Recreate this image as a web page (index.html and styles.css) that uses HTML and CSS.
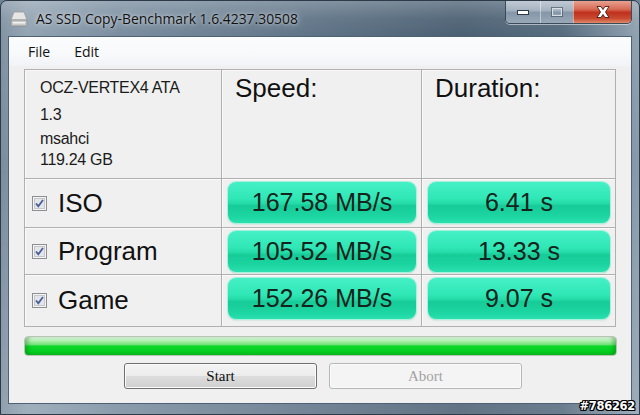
FILE: index.html
```html
<!DOCTYPE html>
<html>
<head>
<meta charset="utf-8">
<link rel="stylesheet" href="styles.css">
</head>
<body>
<div class="window">
  <div class="titlebar">
    <svg class="app-icon" width="18" height="16" viewBox="0 0 18 16">
      <path d="M4 1 L14 1 L17 9 L1 9 Z" fill="#e6e6e6" stroke="#9a9a9a" stroke-width="0.8"/>
      <rect x="1" y="9" width="16" height="6" rx="1.5" fill="#c9c9c9" stroke="#8a8a8a" stroke-width="0.8"/>
      <rect x="3" y="11" width="12" height="1.5" fill="#f2f2f2"/>
    </svg>
    <span class="title">AS SSD Copy-Benchmark 1.6.4237.30508</span>
    <div class="caption-buttons">
      <div class="cb cb-min">
        <svg width="14" height="8" viewBox="0 0 14 8"><rect x="1.5" y="2.5" width="11" height="4" fill="#fff" stroke="#2c3a48" stroke-width="1"/></svg>
      </div>
      <div class="cb cb-max">
        <svg width="14" height="12" viewBox="0 0 14 12"><rect x="1.5" y="1.5" width="11" height="9" fill="none" stroke="#2c3a48" stroke-width="1" opacity="0.6"/><rect x="2.5" y="2.5" width="9" height="7" fill="none" stroke="#d7dde3" stroke-width="1.2"/></svg>
      </div>
      <div class="cb cb-close">
        <svg width="18" height="14" viewBox="0 0 18 14"><path d="M3 1.5 H7 L9 4.5 L11 1.5 H15 L11.5 7 L15 12.5 H11 L9 9.5 L7 12.5 H3 L6.5 7 Z" fill="#fff" stroke="#4a1a12" stroke-width="0.9" stroke-linejoin="round"/></svg>
      </div>
    </div>
  </div>
  <div class="client">
    <div class="menubar">
      <span class="menu-item">File</span>
      <span class="menu-item">Edit</span>
    </div>
    <div class="content">
      <div class="grid">
        <div class="cell info">
          <div class="info-line l1">OCZ-VERTEX4 ATA</div>
          <div class="info-line l2">1.3</div>
          <div class="info-line l3">msahci</div>
          <div class="info-line l4">119.24 GB</div>
        </div>
        <div class="cell head">Speed:</div>
        <div class="cell head">Duration:</div>

        <div class="cell label">
          <svg class="check" width="15" height="15" viewBox="0 0 15 15"><rect x="0.5" y="0.5" width="14" height="14" fill="#f4f4f4" stroke="#8e8f8f"/><rect x="2.5" y="2.5" width="10" height="10" fill="#e2e6ea" stroke="#c4c8cc"/><path d="M4 7.5 L6.3 10.2 L11 4" fill="none" stroke="#4a5f97" stroke-width="1.8"/></svg>
          <span>ISO</span>
        </div>
        <div class="cell val"><div class="pill">167.58 MB/s</div></div>
        <div class="cell val"><div class="pill">6.41 s</div></div>

        <div class="cell label">
          <svg class="check" width="15" height="15" viewBox="0 0 15 15"><rect x="0.5" y="0.5" width="14" height="14" fill="#f4f4f4" stroke="#8e8f8f"/><rect x="2.5" y="2.5" width="10" height="10" fill="#e2e6ea" stroke="#c4c8cc"/><path d="M4 7.5 L6.3 10.2 L11 4" fill="none" stroke="#4a5f97" stroke-width="1.8"/></svg>
          <span>Program</span>
        </div>
        <div class="cell val"><div class="pill">105.52 MB/s</div></div>
        <div class="cell val"><div class="pill">13.33 s</div></div>

        <div class="cell label">
          <svg class="check" width="15" height="15" viewBox="0 0 15 15"><rect x="0.5" y="0.5" width="14" height="14" fill="#f4f4f4" stroke="#8e8f8f"/><rect x="2.5" y="2.5" width="10" height="10" fill="#e2e6ea" stroke="#c4c8cc"/><path d="M4 7.5 L6.3 10.2 L11 4" fill="none" stroke="#4a5f97" stroke-width="1.8"/></svg>
          <span>Game</span>
        </div>
        <div class="cell val"><div class="pill">152.26 MB/s</div></div>
        <div class="cell val"><div class="pill">9.07 s</div></div>
      </div>
      <div class="progress"></div>
      <div class="buttons">
        <div class="btn">Start</div>
        <div class="btn disabled">Abort</div>
      </div>
    </div>
  </div>
  <div class="bottom-frame"></div>
  <div class="watermark">#786262</div>
</div>
</body>
</html>
```

FILE: styles.css
```css
* { box-sizing: border-box; }
html, body { margin: 0; padding: 0; }
body { width: 640px; height: 415px; overflow: hidden; background: #6f8396; }

.window {
  position: relative;
  width: 640px;
  height: 415px;
  display: flex;
  flex-direction: column;
  border-radius: 7px 7px 0 0;
  background:
    linear-gradient(180deg, rgba(255,255,255,0.08) 0%, rgba(255,255,255,0) 40%, rgba(255,255,255,0.18) 100%),
    linear-gradient(90deg, #7a8c9d 0%, #8c9eae 4%, #72879a 18%, #586e82 45%, #40566a 72%, #4b6276 88%, #8a9cac 100%);
  border: 1px solid #2d3a47;
  overflow: hidden;
}

.titlebar {
  height: 35px;
  display: flex;
  align-items: center;
  padding: 0 7px 0 9px;
  background: linear-gradient(180deg, rgba(255,255,255,0.22) 0%, rgba(255,255,255,0.05) 50%, rgba(0,0,0,0) 100%);
}
.app-icon { flex: none; }
.title {
  margin-left: 8px;
  font-family: "Open Sans", "Noto Sans", sans-serif;
  font-size: 13.9px;
  color: #111;
  text-shadow: 0 0 7px rgba(255,255,255,0.7), 0 0 3px rgba(255,255,255,0.5);
  white-space: nowrap;
}
.caption-buttons {
  margin-left: auto;
  align-self: flex-start;
  display: flex;
  height: 24px;
  margin-top: -1px;
  border: 1px solid #3b4b5a;
  border-top: none;
  border-radius: 0 0 5px 5px;
  overflow: hidden;
  box-shadow: 0 1px 0 rgba(255,255,255,0.5);
}
.cb {
  display: flex;
  align-items: center;
  justify-content: center;
  height: 100%;
  border-left: 1px solid rgba(255,255,255,0.45);
}
.cb:first-child { border-left: none; }
.cb-min, .cb-max {
  width: 34px;
  background: linear-gradient(180deg, #c3cdd7 0%, #a6b3c0 45%, #8496a8 55%, #9aa9b8 100%);
}
.cb-max { width: 33px; }
.cb-close {
  width: 58px;
  background: linear-gradient(180deg, #e9a898 0%, #d76b55 40%, #c0301c 55%, #c84a30 80%, #e08a6a 100%);
}

.client {
  flex: 1;
  margin: 0 7px;
  background: #f0f0f0;
  border: 1px solid #4f6275;
  display: flex;
  flex-direction: column;
}
.menubar {
  height: 29px;
  display: flex;
  align-items: center;
  gap: 24px;
  padding-left: 19px;
  background: linear-gradient(180deg, #fbfcfd 0%, #f8f9fb 60%, #f1f3f6 100%);
  font-family: "Open Sans", "Noto Sans", sans-serif;
  font-size: 14px;
  color: #111;
}

.content {
  padding: 3px 0 0 15px;
  display: flex;
  flex-direction: column;
}

.grid {
  display: grid;
  grid-template-columns: 197px 200px 194px;
  grid-template-rows: 109px 49px 47px 52px;
  width: 592px;
  border-top: 1px solid #b0b0b0;
  border-left: 1px solid #b0b0b0;
  font-family: "Liberation Sans", Arial, sans-serif;
  color: #111;
}
.cell {
  border-right: 1px solid #b0b0b0;
  border-bottom: 1px solid #b0b0b0;
  box-shadow: inset 1px 1px 0 #fafafa;
}

.info { padding: 8px 0 0 15px; font-size: 16px; line-height: 20px; color: #1b1b1b; }
.info-line { letter-spacing: -0.3px; }
.l2 { margin-top: 7px; }
.l3 { margin-top: 4px; }
.l4 { margin-top: 1px; }

.head {
  padding: 3px 0 0 13px;
  font-size: 26px;
  line-height: 30px;
}

.label {
  display: flex;
  align-items: center;
  padding-left: 7px;
  font-size: 26px;
}
.label .check { margin-right: 11px; flex: none; }

.val {
  padding: 3px 5px 0 6px;
}
.pill {
  height: 41px;
  border-radius: 8px;
  display: flex;
  align-items: center;
  justify-content: center;
  font-size: 25px;
  color: #14231c;
  background: linear-gradient(180deg, #45f0c6 0%, #30e7b6 40%, #25dca8 52%, #16cb98 58%, #1dd6a2 85%, #2be0b0 100%);
  box-shadow: 0 0 0 1px #a8f2dc, 0 1px 2px rgba(40,160,120,0.4);
}

.progress {
  margin-top: 9px;
  width: 593px;
  height: 20px;
  border-radius: 4px;
  border: 1px solid #b8c4b8;
  background: linear-gradient(180deg, #e2f7e2 0%, #a6eea6 25%, #72e27a 42%, #0ed92a 50%, #04ce20 80%, #0bbf20 100%);
  box-shadow: inset 5px 0 4px -2px rgba(0,100,0,0.35), inset -5px 0 4px -2px rgba(0,100,0,0.35);
}

.buttons {
  display: flex;
  gap: 12px;
  margin-top: 7px;
  padding-left: 100px;
}
.btn {
  width: 193px;
  height: 26px;
  border: 1px solid #707070;
  border-radius: 3px;
  display: flex;
  align-items: center;
  justify-content: center;
  font-family: "Liberation Serif", "Times New Roman", serif;
  font-size: 15px;
  color: #111;
  background: linear-gradient(180deg, #f4f4f4 0%, #ececec 48%, #dcdcdc 52%, #d0d0d0 100%);
  box-shadow: inset 0 0 0 1px #fbfbfb;
}
.btn.disabled {
  border-color: #b5b8ba;
  background: #f4f4f4;
  color: #a3a3a3;
}

.bottom-frame {
  height: 10px;
}

.watermark {
  position: absolute;
  right: 4px;
  bottom: 1px;
  font-family: "DejaVu Sans", sans-serif;
  font-size: 11.5px;
  font-weight: bold;
  color: #fff;
  letter-spacing: -0.3px;
  text-shadow: 1px 0 0 #000, -1px 0 0 #000, 0 1px 0 #000, 0 -1px 0 #000, 1px 1px 0 #000, -1px -1px 0 #000, 1px -1px 0 #000, -1px 1px 0 #000;
}
```
